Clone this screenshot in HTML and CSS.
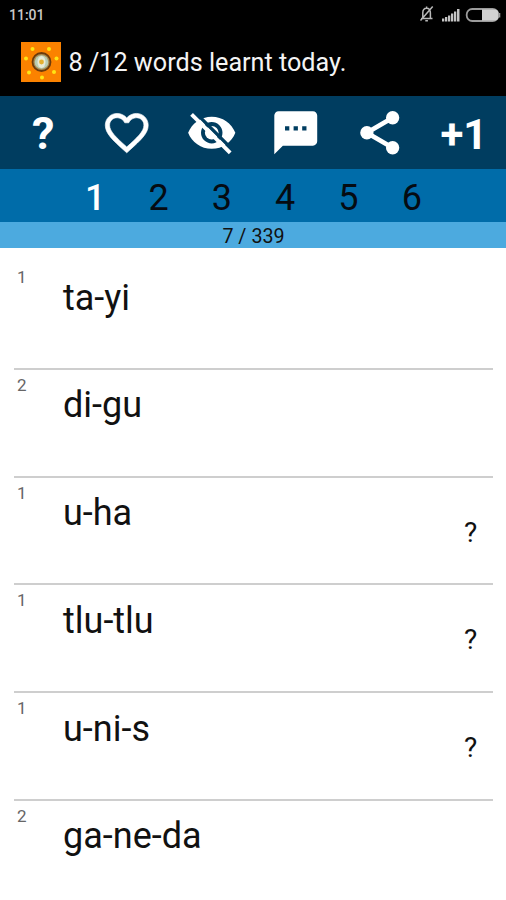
FILE: index.html
```html
<!DOCTYPE html>
<html lang="en">
<head>
<meta charset="utf-8">
<title>Words</title>
<link rel="stylesheet" href="styles.css">
</head>
<body>
<div class="status">
  <span class="time">11:01</span>
  <svg class="status-icons" viewBox="0 0 84 20" width="84" height="20">
    <g fill="none" stroke="#b8b8b8" stroke-width="1.5">
      <path d="M3 14.500h11.500M4.800 14v-5c0-3 1.500-4.800 3.800-4.800s3.800 1.800 3.800 4.800v5M8.600 2.500v1.500M7.300 16.800h2.600M2.500 16.500L14.700 2.500"/>
    </g>
    <path fill="#c4c4c4" d="M24 14.500h2.300v3h-2.300zM27 13h2.300v4.500h-2.300zM30 11.500h2.300v6h-2.300zM33 9.500h2.300v8h-2.300zM36 7.500h2.300v10h-2.300zM39 5h2.500v12.500h-2.500z"/>
    <rect x="48.700" y="5" width="31.500" height="12" rx="5.500" fill="none" stroke="#9b9b9b" stroke-width="1.800"/>
    <path fill="#d2d2d2" d="M64 5.500h12.500a4 4 0 0 1 4 4v3a4 4 0 0 1-4 4H64z"/>
    <path fill="#9b9b9b" d="M80 9h2.300v4.500H80z"/>
  </svg>
</div>
<header class="title">
  <svg class="logo" viewBox="0 0 40 40" width="40" height="40">
    <rect width="40" height="40" fill="#fb8200"/>
    <g fill="#ffe414">
      <circle cx="11.500" cy="7" r="2"/><circle cx="28" cy="7" r="2"/><circle cx="5" cy="16.500" r="2"/><circle cx="35.500" cy="16.500" r="2"/><circle cx="8" cy="30.500" r="2"/><circle cx="33" cy="30" r="2"/><circle cx="21" cy="35.500" r="2"/>
    </g>
    <circle cx="20.500" cy="20" r="9" fill="#a98d55" stroke="#6c3b0c" stroke-width="1.800"/>
    <circle cx="20.500" cy="20" r="6.800" fill="#b9cdb4"/>
    <ellipse cx="20.500" cy="20" rx="4" ry="6" fill="#e9ead5"/>
    <circle cx="20.500" cy="20" r="2.400" fill="#e4b030"/>
  </svg>
  <h1>8 /12 words learnt today.</h1>
</header>
<nav class="tools">
  <span class="help">?</span>
  <svg viewBox="0 0 24 24"><path stroke="#fff" stroke-width=".3" d="M16.500 3c-1.740 0-3.410.81-4.500 2.090C10.910 3.810 9.240 3 7.500 3 4.420 3 2 5.420 2 8.500c0 3.780 3.400 6.860 8.550 11.540L12 21.350l1.450-1.320C18.600 15.360 22 12.280 22 8.500 22 5.420 19.580 3 16.500 3zm-4.400 15.550l-.1.100-.1-.1C7.140 14.240 4 11.390 4 8.500 4 6.500 5.500 5 7.500 5c1.540 0 3.040.99 3.570 2.360h1.870C13.460 5.990 14.960 5 16.500 5c2 0 3.500 1.500 3.500 3.500 0 2.890-3.140 5.740-7.900 10.050z"/></svg>
  <svg viewBox="0 0 24 24"><path fill-rule="evenodd" d="M12 4.500C7 4.500 2.730 7.610 1 12c1.730 4.390 6 7.500 11 7.500s9.270-3.110 11-7.500c-1.730-4.390-6-7.500-11-7.500zM12 7a5 5 0 1 1 0 10 5 5 0 1 1 0-10z"/><circle cx="12" cy="12" r="3.200"/><path class="cut" d="M4.200 2.400L22 20.200"/><path class="slash" d="M2.600 3.400L20.600 21.400"/></svg>
  <svg viewBox="0 0 24 24"><path d="M20 2H4c-1.100 0-1.990.9-1.990 2L2 22l4-4h14c1.100 0 2-.9 2-2V4c0-1.100-.9-2-2-2zM9 11H7V9h2v2zm4 0h-2V9h2v2zm4 0h-2V9h2v2z"/></svg>
  <svg viewBox="0 0 24 24"><path class="links" d="M18 5L6 12l12 7"/><circle cx="18" cy="5" r="3.100"/><circle cx="6" cy="12" r="3.100"/><circle cx="18" cy="19" r="3.100"/></svg>
  <span class="plus">+1</span>
</nav>
<nav class="tabs"><span class="active">1</span><span>2</span><span>3</span><span>4</span><span>5</span><span>6</span></nav>
<div class="count">7 / 339</div>
<main class="list">
  <div class="row"><span class="level">1</span><span class="word">ta-yi</span></div>
  <div class="row"><span class="level">2</span><span class="word">di-gu</span></div>
  <div class="row"><span class="level">1</span><span class="word">u-ha</span><span class="hint">?</span></div>
  <div class="row"><span class="level">1</span><span class="word">tlu-tlu</span><span class="hint">?</span></div>
  <div class="row"><span class="level">1</span><span class="word">u-ni-s</span><span class="hint">?</span></div>
  <div class="row"><span class="level">2</span><span class="word">ga-ne-da</span></div>
</main>
</body>
</html>
```

FILE: styles.css
```css
* { box-sizing: border-box; }
body {
  margin: 0;
  height: 900px;
  overflow: hidden;
  background: #fff;
  color: #111;
  font-family: Roboto, sans-serif;
}
.status {
  display: flex;
  justify-content: space-between;
  height: 30px;
  padding: 5px 4px 0 9px;
  background: #000;
}
.time { color: #c8c8c8; font-size: 14px; font-weight: 500; line-height: 20px; }
.status-icons { margin-top: -1px; }
.title {
  display: flex;
  align-items: center;
  gap: 8px;
  height: 66px;
  padding: 0 0 2px 20.500px;
  background: #000;
}
.title h1 { margin: 0; padding-top: 1px; color: #f4f4f4; font-size: 25.200px; font-weight: 400; line-height: 30px; white-space: nowrap; }
.tools {
  display: grid;
  grid-template-columns: repeat(6, 1fr);
  place-items: center;
  height: 73px;
  padding-left: 1px;
  background: #003d60;
  color: #fff;
  font-weight: 700;
}
.tools svg { width: 51.500px; height: 51.500px; fill: #fff; }
.tools .cut { stroke: #003d60; stroke-width: 1.600; }
.tools .slash { stroke: #fff; stroke-width: 1.800; }
.tools .links { fill: none; stroke: #fff; stroke-width: 2.200; }
.help { padding-top: 3px; font-size: 45px; line-height: 50px; }
.plus { padding-top: 4px; font-size: 42px; line-height: 50px; }
.tabs {
  display: grid;
  grid-template-columns: repeat(6, 63.300px);
  justify-content: center;
  height: 53px;
  padding-left: 1px;
  background: #006ca9;
  color: #050b12;
  font-size: 36px;
  line-height: 58px;
  text-align: center;
}
.active { color: #fff; font-weight: 500; }
.count { height: 26px; padding-left: 1px; background: #4caadf; font-size: 19.700px; line-height: 30px; text-align: center; }
.list { padding: 14px 13px 0 14px; }
.row {
  display: grid;
  grid-template-columns: 49px 1fr 29px;
  align-items: start;
  height: 107.800px;
  border-bottom: 2px solid #cecece;
}
.row:last-child { border-bottom: 0; }
.level { padding: 5px 0 0 3px; color: #666; font-size: 17px; line-height: 20px; }
.word { padding-top: 14.500px; font-size: 36px; line-height: 42px; }
.hint { padding-top: 39px; font-size: 28px; line-height: 32px; }
```
